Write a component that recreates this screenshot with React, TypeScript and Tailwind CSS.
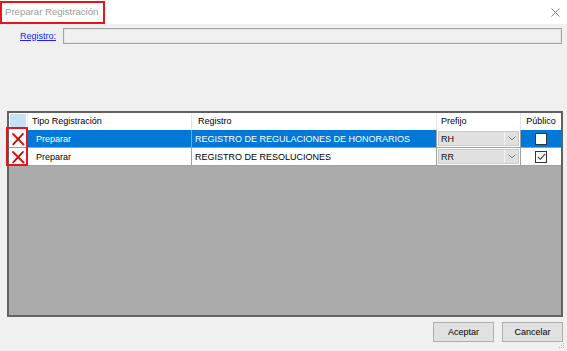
import React from "react";

const RedX = () => (
  <svg width="14" height="14" viewBox="0 0 14 14">
    <path d="M2 2 L12.5 12.5" stroke="#e01010" strokeWidth="1.9" strokeLinecap="round" />
    <path d="M12 1.8 L2.2 12.3" stroke="#c80000" strokeWidth="1.7" strokeLinecap="round" />
  </svg>
);

const Chevron = () => (
  <svg width="8" height="5" viewBox="0 0 8 5">
    <path d="M0.5 0.5 L4 4 L7.5 0.5" fill="none" stroke="#808080" strokeWidth="1" />
  </svg>
);

const Check = () => (
  <svg width="9" height="8" viewBox="0 0 9 8">
    <path d="M0.8 3.8 L3.3 6.3 L8.2 0.8" fill="none" stroke="#333" strokeWidth="1.1" />
  </svg>
);

function Row({ selected, registro, prefix, checked }: { selected: boolean; registro: string; prefix: string; checked: boolean }) {
  const cellBg = selected ? "bg-[#0078d7] text-white" : "bg-white text-[#000]";
  return (
    <div className="flex h-[18px] border-b border-[#a0a0a0]">
      <div className="w-[19px] shrink-0 bg-white border-r border-[#a0a0a0] flex items-center justify-center">
        <RedX />
      </div>
      <div className={`w-[164px] shrink-0 ${cellBg} border-r border-[#a0a0a0] pl-[8px] pt-[1px] flex items-center`}>Preparar</div>
      <div className={`w-[245px] shrink-0 ${cellBg} border-r border-[#a0a0a0] pl-[3px] pt-[1px] flex items-center whitespace-nowrap`}>{registro}</div>
      <div className="w-[84px] shrink-0 bg-white border-r border-[#a0a0a0] p-[1px] flex">
        <div className="flex-1 flex bg-[#e0e0e0] border border-[#c9c9c9]">
          <div className="flex-1 pl-[2px] pt-[1px] flex items-center text-[#111]">{prefix}</div>
          <div className="w-[14px] border-l border-[#f4f4f4] flex items-center justify-center">
            <Chevron />
          </div>
        </div>
      </div>
      <div className={`w-[40px] shrink-0 ${selected ? "bg-[#0078d7]" : "bg-white"} flex items-center justify-center`}>
        <div className="w-[12px] h-[12px] bg-white border border-[#333] flex items-center justify-center">
          {checked && <Check />}
        </div>
      </div>
    </div>
  );
}

export default function App() {
  return (
    <div className="relative w-[567px] h-[351px] overflow-hidden bg-[#f0f0f0] text-[9px] leading-none font-['Liberation_Sans',Arial,sans-serif]">
      {/* title bar */}
      <div className="h-[24px] bg-white flex items-center justify-between pl-[5px] pr-[7px]">
        <span className="text-[9.6px] text-[#9b9b9b]">Preparar Registración</span>
        <svg width="9" height="9" viewBox="0 0 9 9">
          <path d="M0.5 0.5 L8.5 8.5 M8.5 0.5 L0.5 8.5" stroke="#7a7a7a" strokeWidth="0.9" />
        </svg>
      </div>

      {/* Registro field */}
      <div className="mt-[4px] h-[16px] flex items-center">
        <span className="ml-[20px] w-[43px] text-[#2020ff] underline underline-offset-[1px]">Registro:</span>
        <div className="w-[499px] h-[16px] border border-[#a3a3a3] bg-[#f0f0f0] shadow-[inset_0_0_0_1px_#e6e6e6]" />
      </div>

      {/* grid */}
      <div className="mt-[67px] ml-[7px] w-[556px] h-[206px] border-2 border-[#626262] bg-[#ababab]">
        <div className="flex h-[17px] bg-white">
          <div className="w-[19px] shrink-0 p-[1px] border-r border-[#e5e5e5]">
            <div className="w-full h-full bg-[#c7e0f4]" />
          </div>
          <div className="w-[164px] shrink-0 pl-[4px] border-r border-[#e5e5e5] flex items-center">Tipo Registración</div>
          <div className="w-[245px] shrink-0 pl-[6px] border-r border-[#e5e5e5] flex items-center">Registro</div>
          <div className="w-[84px] shrink-0 pl-[4px] border-r border-[#e5e5e5] flex items-center">Prefijo</div>
          <div className="w-[40px] shrink-0 flex items-center justify-center">Público</div>
        </div>
        <Row selected={true} registro="REGISTRO DE REGULACIONES DE HONORARIOS" prefix="RH" checked={false} />
        <Row selected={false} registro="REGISTRO DE RESOLUCIONES" prefix="RR" checked={true} />
      </div>

      {/* buttons */}
      <div className="mt-[5px] pr-[4px] flex justify-end gap-[8px]">
        <button className="w-[61px] h-[20px] bg-[#e1e1e1] border border-[#adadad] text-[9px] text-black">Aceptar</button>
        <button className="w-[61px] h-[20px] bg-[#e1e1e1] border border-[#adadad] text-[9px] text-black">Cancelar</button>
      </div>

      {/* size grip */}
      <svg className="absolute right-[2px] bottom-[2px]" width="7" height="7" viewBox="0 0 7 7">
        <rect x="5" y="1" width="1" height="1" fill="#b8b8b8" />
        <rect x="3" y="3" width="1" height="1" fill="#b8b8b8" />
        <rect x="5" y="3" width="1" height="1" fill="#b8b8b8" />
        <rect x="1" y="5" width="1" height="1" fill="#b8b8b8" />
        <rect x="3" y="5" width="1" height="1" fill="#b8b8b8" />
        <rect x="5" y="5" width="1" height="1" fill="#b8b8b8" />
      </svg>

      {/* red annotation boxes */}
      <div className="absolute left-0 top-[1px] w-[105px] h-[23px] border-2 border-[#e8141c]" />
      <div className="absolute left-[6px] top-[127px] w-[22px] h-[39px] border-2 border-[#e8141c]" />
    </div>
  );
}
